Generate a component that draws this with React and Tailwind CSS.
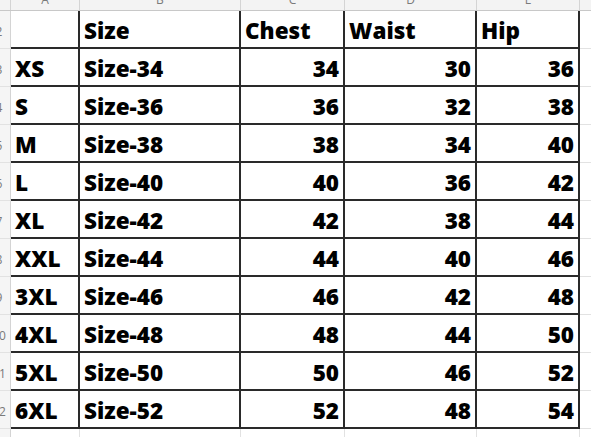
import React from "react";

const cols = [
  { letter: "A", w: "w-[69px]" },
  { letter: "B", w: "w-[161px]" },
  { letter: "C", w: "w-[104px]" },
  { letter: "D", w: "w-[132px]" },
  { letter: "E", w: "w-[103px]" },
];

const rows = [
  ["XS", "Size-34", 34, 30, 36],
  ["S", "Size-36", 36, 32, 38],
  ["M", "Size-38", 38, 34, 40],
  ["L", "Size-40", 40, 36, 42],
  ["XL", "Size-42", 42, 38, 44],
  ["XXL", "Size-44", 44, 40, 46],
  ["3XL", "Size-46", 46, 42, 48],
  ["4XL", "Size-48", 48, 44, 50],
  ["5XL", "Size-50", 50, 46, 52],
  ["6XL", "Size-52", 52, 48, 54],
];

const RowNum = ({ n }) => (
  <div className="w-[11px] shrink-0 h-full bg-[#f5f5f5] border-r border-b border-r-[#d4d4d4] border-b-[#e2e2e2] overflow-hidden relative font-normal">
    <div className="absolute left-[-11px] w-[20px] bottom-[9px] text-center text-[12px] leading-[14px] text-[#7a7a7a]">
      {n}
    </div>
  </div>
);

const Cell = ({ w, right, children }) => (
  <div
    className={`${w} shrink-0 h-full border-r-2 border-b-2 border-[#2a2a2a] flex items-end pb-[4px] ${
      right ? "justify-end pr-[4px]" : "pl-[4px]"
    }`}
  >
    {children}
  </div>
);

const Filler = () => (
  <div className="flex-1 h-full border-b border-[#e2e2e2]" />
);

export default function App() {
  return (
    <div
      className="w-[591px] h-[437px] overflow-hidden bg-white text-black font-extrabold"
      style={{ fontFamily: '"Open Sans", "Noto Sans", sans-serif' }}
    >
      {/* column letters */}
      <div className="flex h-[11px] bg-[#f3f3f3] border-b border-[#c8c8c8] font-normal">
        <div className="w-[11px] shrink-0 border-r border-[#d4d4d4]" />
        {cols.map((c) => (
          <div
            key={c.letter}
            className={`${c.w} shrink-0 border-r border-[#d4d4d4] overflow-hidden relative`}
          >
            <div className="absolute inset-x-0 bottom-[3px] text-center text-[12px] leading-[14px] text-[#7a7a7a]">
              {c.letter}
            </div>
          </div>
        ))}
        <div className="flex-1" />
      </div>

      {/* header row */}
      <div className="flex h-[38px] text-[22.5px] leading-[24px]">
        <RowNum n="2" />
        <Cell w="w-[69px]" />
        <Cell w="w-[161px]">Size</Cell>
        <Cell w="w-[104px]">Chest</Cell>
        <Cell w="w-[132px]">Waist</Cell>
        <Cell w="w-[103px]">Hip</Cell>
        <Filler />
      </div>

      {rows.map((r, i) => (
        <div key={r[0]} className="flex h-[38px] text-[22.5px] leading-[24px]">
          <RowNum n={i + 3} />
          <Cell w="w-[69px]">{r[0]}</Cell>
          <Cell w="w-[161px]">{r[1]}</Cell>
          <Cell w="w-[104px]" right>
            {r[2]}
          </Cell>
          <Cell w="w-[132px]" right>
            {r[3]}
          </Cell>
          <Cell w="w-[103px]" right>
            {r[4]}
          </Cell>
          <Filler />
        </div>
      ))}

      {/* empty row below the table */}
      <div className="flex h-[38px]">
        <RowNum n="13" />
        {cols.map((c) => (
          <div
            key={c.letter}
            className={`${c.w} shrink-0 h-full border-r border-[#e2e2e2]`}
          />
        ))}
        <div className="flex-1" />
      </div>
    </div>
  );
}
